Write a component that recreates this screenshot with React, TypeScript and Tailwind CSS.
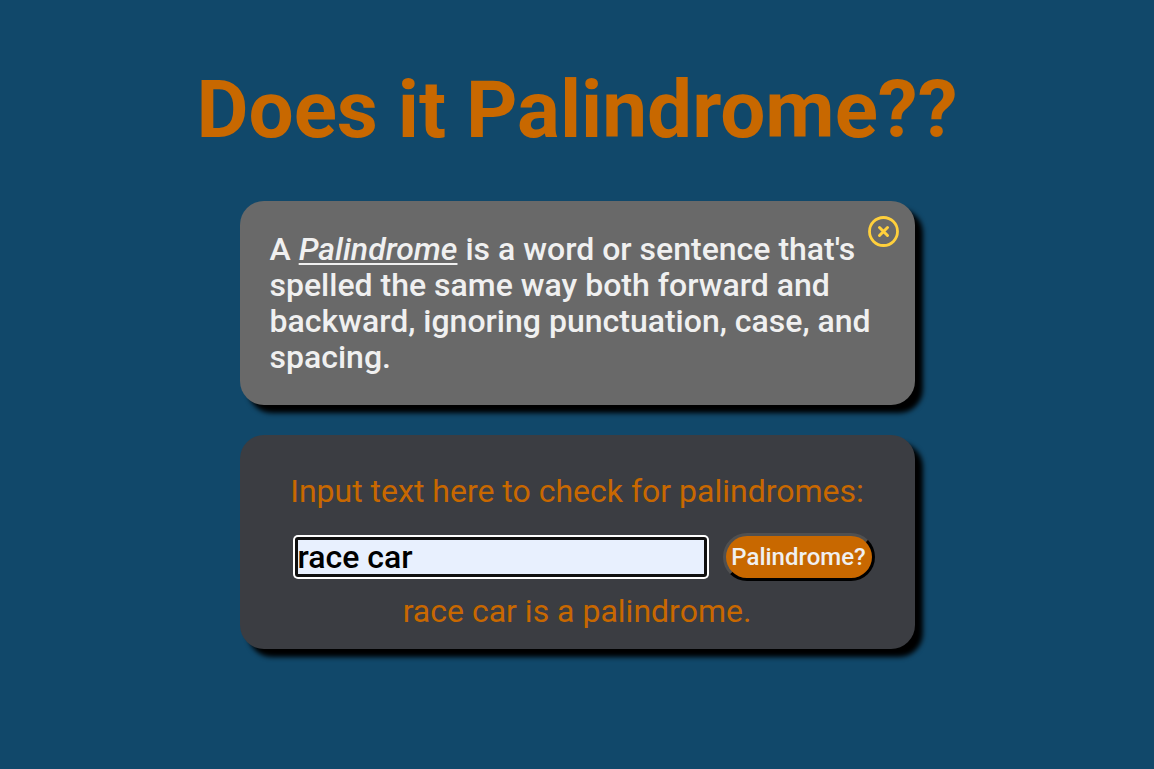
import { useState, type FormEvent } from 'react';

function describe(text: string) {
  const letters = text.toLowerCase().replace(/[^a-z0-9]/g, '');
  const reversed = letters.split('').reverse().join('');
  return `${text} is ${letters === reversed ? '' : 'not '}a palindrome.`;
}

function CloseIcon() {
  return (
    <svg viewBox="0 0 32 32" className="size-8" fill="none" stroke="currentColor" aria-hidden="true">
      <circle cx="16.5" cy="15.5" r="14" strokeWidth="2.8" />
      <path d="M12.5 11.5l8 8M20.5 11.5l-8 8" strokeWidth="3" strokeLinecap="round" />
    </svg>
  );
}

export default function App() {
  const [text, setText] = useState('race car');
  const [result, setResult] = useState(describe('race car'));
  const [open, setOpen] = useState(true);

  const check = (event: FormEvent) => {
    event.preventDefault();
    setResult(describe(text));
  };

  return (
    <main className="flex min-h-screen flex-col items-center bg-[#11486a] px-4 pt-16 pb-16 font-['Roboto','Noto_Sans',sans-serif] text-[32px] leading-9 text-[#c86800]">
      <h1 className="mb-11 text-center text-[80px] leading-[93px] font-bold">Does it Palindrome??</h1>

      <div className="flex w-full max-w-[675px] flex-col gap-[30px]">
        {open && (
          <section className="relative rounded-3xl bg-[#696969] p-[30px] font-medium text-[#f0f0f0] shadow-[8px_8px_5px_#000]">
            <p>
              A <em className="underline decoration-2 underline-offset-3">Palindrome</em> is a word or sentence that's
              spelled the same way both forward and backward, ignoring punctuation, case, and spacing.
            </p>
            <button
              type="button"
              aria-label="Close"
              onClick={() => setOpen(false)}
              className="absolute top-[15px] right-4 text-[#ffd03c]"
            >
              <CloseIcon />
            </button>
          </section>
        )}

        <section className="flex flex-col items-center rounded-3xl bg-[#3b3d42] px-[30px] pt-[38px] pb-5 shadow-[8px_8px_5px_#000]">
          <form onSubmit={check} className="flex w-full flex-col items-center gap-6">
            <label htmlFor="phrase">Input text here to check for palindromes:</label>
            <div className="flex w-full items-center justify-center gap-4 pl-[25px] pr-[10px]">
              <input
                id="phrase"
                type="text"
                value={text}
                onChange={(event) => setText(event.target.value)}
                className="h-10 min-w-0 flex-1 rounded-[3px] border-3 border-[#101010] bg-[#e8f0fe] font-medium text-black shadow-[0_0_0_2px_#fff] outline-none"
              />
              <button
                type="submit"
                className="h-12 w-38 shrink-0 rounded-3xl border-3 border-t-[#505050] border-r-black border-b-black border-l-[#505050] bg-[#c86800] text-2xl font-medium text-[#f0f0f0]"
              >
                Palindrome?
              </button>
            </div>
          </form>
          <p className="mt-3" aria-live="polite">{result}</p>
        </section>
      </div>
    </main>
  );
}
